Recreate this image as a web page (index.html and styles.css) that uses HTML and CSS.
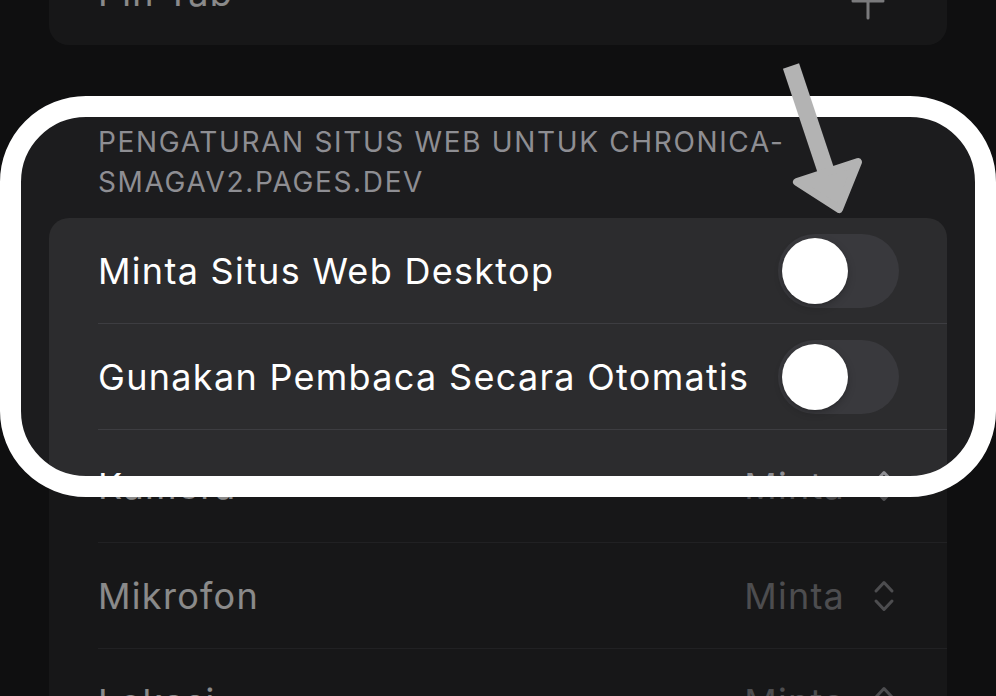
FILE: index.html
```html
<!DOCTYPE html>
<html lang="id">
<head>
<meta charset="utf-8">
<title>Pengaturan Situs Web</title>
<link rel="stylesheet" href="styles.css">
</head>
<body>
<div class="screen">
  <div class="card card-top">
    <div class="row">
      <div class="row-inner last">
        <span class="label">Pin Tab</span>
        <svg class="plus" width="34" height="38" viewBox="0 0 34 38"><path d="M17 2 V36 M2 19 H32" stroke="#e2e2e6" stroke-width="3" stroke-linecap="round" fill="none"/></svg>
      </div>
    </div>
  </div>

  <div class="section-header">PENGATURAN SITUS WEB UNTUK CHRONICA-<br>SMAGAV2.PAGES.DEV</div>

  <div class="card">
    <div class="row">
      <div class="row-inner">
        <span class="label">Minta Situs Web Desktop</span>
        <span class="toggle"><span class="knob"></span></span>
      </div>
    </div>
    <div class="row">
      <div class="row-inner">
        <span class="label">Gunakan Pembaca Secara Otomatis</span>
        <span class="toggle"><span class="knob"></span></span>
      </div>
    </div>
    <div class="row">
      <div class="row-inner tall">
        <span class="label">Kamera</span>
        <span class="value">Minta</span>
        <svg class="updown" width="22" height="34" viewBox="0 0 22 34"><path d="M3 12 L11 3.5 L19 12 M3 22 L11 30.5 L19 22" stroke="#8e8e93" stroke-width="3" stroke-linecap="round" stroke-linejoin="round" fill="none"/></svg>
      </div>
    </div>
    <div class="row">
      <div class="row-inner">
        <span class="label">Mikrofon</span>
        <span class="value">Minta</span>
        <svg class="updown" width="22" height="34" viewBox="0 0 22 34"><path d="M3 12 L11 3.5 L19 12 M3 22 L11 30.5 L19 22" stroke="#8e8e93" stroke-width="3" stroke-linecap="round" stroke-linejoin="round" fill="none"/></svg>
      </div>
    </div>
    <div class="row">
      <div class="row-inner">
        <span class="label">Lokasi</span>
        <span class="value">Minta</span>
        <svg class="updown" width="22" height="34" viewBox="0 0 22 34"><path d="M3 12 L11 3.5 L19 12 M3 22 L11 30.5 L19 22" stroke="#8e8e93" stroke-width="3" stroke-linecap="round" stroke-linejoin="round" fill="none"/></svg>
      </div>
    </div>
  </div>
</div>

<div class="spotlight"></div>

<svg class="arrow" width="996" height="696" viewBox="0 0 996 696">
  <line x1="791" y1="66" x2="827" y2="174" stroke="#b3b3b3" stroke-width="17"/>
  <polygon points="797,182 858,162 839,209" fill="#b3b3b3" stroke="#b3b3b3" stroke-width="8" stroke-linejoin="round"/>
</svg>
</body>
</html>
```

FILE: styles.css
```css
html, body {
  margin: 0;
  padding: 0;
}

body {
  width: 996px;
  height: 696px;
  overflow: hidden;
  background: #1c1c1e;
  font-family: Inter, "Noto Sans", "Liberation Sans", sans-serif;
  color: #ffffff;
  position: relative;
}

.screen {
  display: flex;
  flex-direction: column;
}

.card {
  margin: 0 49px;
  background: #2c2c2e;
  border-radius: 20px;
  overflow: hidden;
}

.card-top {
  margin-top: -60px;
}

.row {
  padding-left: 49px;
}

.row-inner {
  display: flex;
  align-items: center;
  height: 105px;
  border-bottom: 1px solid #3d3d41;
  padding-right: 48px;
}

.row-inner.last {
  border-bottom: none;
}

.row-inner.tall {
  height: 112px;
}

.label {
  flex: 1;
  font-size: 36px;
  letter-spacing: 1.3px;
  white-space: nowrap;
}

.plus {
  margin-right: 14px;
  margin-top: 16px;
}

.section-header {
  padding: 77px 49px 16px 98px;
  font-size: 28px;
  line-height: 40px;
  color: #8e8e93;
  letter-spacing: 1.65px;
}

.toggle {
  width: 121px;
  height: 74px;
  box-sizing: border-box;
  border-radius: 37px;
  background: #39393d;
  display: flex;
  align-items: center;
  padding: 0 4px;
}

.knob {
  width: 66px;
  height: 66px;
  border-radius: 50%;
  background: #ffffff;
  box-shadow: 0 3px 8px rgba(0, 0, 0, 0.2), 0 1px 2px rgba(0, 0, 0, 0.15);
}

.value {
  font-size: 36px;
  color: #8e8e93;
  letter-spacing: 1.2px;
  margin-right: 28px;
}

.updown {
  margin-right: 4px;
}

.spotlight {
  position: absolute;
  left: 0;
  top: 96px;
  width: 996px;
  height: 401px;
  box-sizing: border-box;
  border: 21px solid #ffffff;
  border-radius: 86px;
  box-shadow: 0 0 0 1400px rgba(0, 0, 0, 0.46);
}

.arrow {
  position: absolute;
  left: 0;
  top: 0;
  pointer-events: none;
}
```
